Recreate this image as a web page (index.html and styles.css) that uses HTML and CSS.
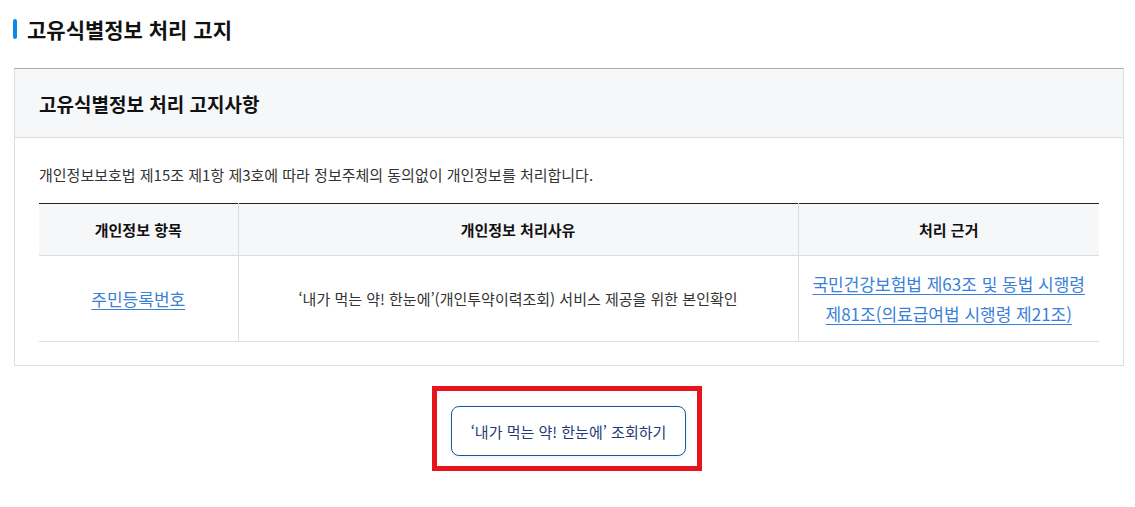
FILE: index.html
```html
<!DOCTYPE html>
<html lang="ko">
<head>
  <meta charset="UTF-8">
  <title>고유식별정보 처리 고지</title>
  <link rel="stylesheet" href="styles.css">
</head>
<body>

<div class="page">
  <h2 class="section-title">고유식별정보 처리 고지</h2>

  <div class="notice-box">
    <div class="notice-head">고유식별정보 처리 고지사항</div>
    <div class="notice-body">
      <p class="notice-desc">개인정보보호법 제15조 제1항 제3호에 따라 정보주체의 동의없이 개인정보를 처리합니다.</p>
      <table class="notice-table">
        <colgroup>
          <col class="col-item">
          <col class="col-reason">
          <col class="col-basis">
        </colgroup>
        <thead>
          <tr>
            <th>개인정보 항목</th>
            <th>개인정보 처리사유</th>
            <th>처리 근거</th>
          </tr>
        </thead>
        <tbody>
          <tr>
            <td><a href="#" class="link-lg">주민등록번호</a></td>
            <td>‘내가 먹는 약! 한눈에’(개인투약이력조회) 서비스 제공을 위한 본인확인</td>
            <td><a href="#" class="link-lg">국민건강보험법 제63조 및 동법 시행령<br>제81조(의료급여법 시행령 제21조)</a></td>
          </tr>
        </tbody>
      </table>
    </div>
  </div>

  <div class="btn-area">
    <div class="btn-frame">
      <button class="btn-outline">‘내가 먹는 약! 한눈에’ 조회하기</button>
    </div>
  </div>
</div>

</body>
</html>
```

FILE: styles.css
```css
html, body {
  margin: 0;
  padding: 0;
  background: #fff;
  font-family: 'Noto Sans CJK KR', 'Noto Sans', sans-serif;
  color: #333;
}

.page {
  width: 1110px;
  margin-left: 14px;
}

.section-title {
  position: relative;
  margin: 14px 0 0;
  padding-left: 13px;
  font-size: 21px;
  line-height: 30px;
  font-weight: 700;
  color: #111;
}

.section-title::before {
  content: '';
  position: absolute;
  left: -1px;
  top: 5px;
  width: 4px;
  height: 20px;
  border-radius: 2px;
  background: #0a8ae6;
}

.notice-box {
  margin-top: 24px;
  border: 1px solid #ddd;
  border-top-color: #aaa;
}

.notice-head {
  height: 68px;
  padding: 0 24px;
  display: flex;
  align-items: center;
  background: #f6f7f9;
  border-bottom: 1px solid #ddd;
  font-size: 19px;
  font-weight: 700;
  color: #111;
}

.notice-body {
  padding: 25px 24px 23px;
}

.notice-desc {
  margin: 0 0 16px;
  font-size: 15px;
  line-height: 24px;
  color: #333;
}

.notice-table {
  width: 100%;
  border-collapse: collapse;
  border-top: 1px solid #222;
  table-layout: fixed;
}

.col-item { width: 199px; }
.col-reason { width: 560px; }
.col-basis { width: 301px; }

.notice-table th {
  height: 51px;
  padding: 0;
  background: #f6f7f9;
  border-bottom: 1px solid #ddd;
  font-size: 15px;
  font-weight: 700;
  color: #111;
}

.notice-table td {
  height: 85px;
  padding: 0;
  text-align: center;
  border-bottom: 1px solid #ddd;
  font-size: 15px;
  color: #333;
}

.notice-table th + th,
.notice-table td + td {
  border-left: 1px solid #ddd;
}

.link-lg {
  font-size: 17px;
  line-height: 30px;
  color: #3a7fd8;
  text-decoration: underline;
  text-underline-offset: 3px;
}

.btn-area {
  display: flex;
  justify-content: center;
  margin-top: 20px;
}

/* red highlight frame around the button */
.btn-frame {
  display: flex;
  margin-right: 4px;
  padding: 15px 11px 10px 14px;
  border: 5px solid #e8141d;
}

.btn-outline {
  width: 235px;
  height: 50px;
  border: 1px solid #1658a5;
  border-radius: 8px;
  background: #fff;
  box-shadow: 0 1px 4px rgba(0, 0, 0, 0.08);
  font-family: inherit;
  font-size: 15px;
  color: #1d3b78;
}
```
